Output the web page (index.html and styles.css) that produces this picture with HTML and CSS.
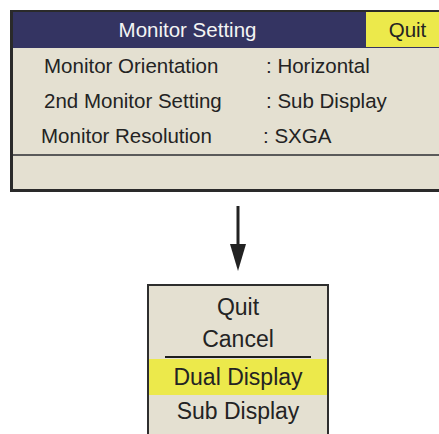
FILE: index.html
```html
<!DOCTYPE html>
<html lang="en">
<head>
  <meta charset="UTF-8">
  <meta name="viewport" content="width=device-width, initial-scale=1.0">
  <title>Monitor Setting</title>
  <link rel="stylesheet" href="styles.css">
</head>
<body>
  <div class="panel">
    <div class="panel-header">
      <div class="panel-title">Monitor Setting</div>
      <div class="panel-quit">Quit</div>
    </div>
    <div class="panel-rows">
      <div class="row">
        <span class="row-label">Monitor Orientation</span>
        <span class="row-value">: Horizontal</span>
      </div>
      <div class="row">
        <span class="row-label">2nd Monitor Setting</span>
        <span class="row-value">: Sub Display</span>
      </div>
      <div class="row row-shift">
        <span class="row-label">Monitor Resolution</span>
        <span class="row-value">: SXGA</span>
      </div>
    </div>
    <div class="panel-footer"></div>
  </div>

  <div class="lower">
    <svg class="arrow" width="16" height="65" viewBox="0 0 16 65">
      <line x1="8" y1="0" x2="8" y2="42" stroke="#222" stroke-width="3"/>
      <polygon points="0,38 16,38 8,65" fill="#222"/>
    </svg>

    <div class="menu">
      <div class="menu-item menu-first">Quit</div>
      <div class="menu-item">Cancel</div>
      <div class="menu-divider"></div>
      <div class="menu-item menu-selected">Dual Display</div>
      <div class="menu-item">Sub Display</div>
    </div>
  </div>
</body>
</html>
```

FILE: styles.css
```css
body {
  margin: 0;
  font-family: "Liberation Sans", Arial, sans-serif;
  color: #232323;
  background: #fff;
  overflow: hidden;
  height: 434px;
}
.panel {
  width: 436px;
  margin: 10px 0 0 10px;
  border: 2px solid #2a2a2a;
  border-bottom-width: 3px;
  border-left-width: 3px;
  background: #e4e0d1;
}
.panel-header {
  display: flex;
  height: 36px;
  background: #343462;
  font-size: 20.5px;
}
.panel-title {
  flex: 1;
  text-align: center;
  line-height: 36px;
  color: #f4f4f4;
  padding-right: 4px;
}
.panel-quit {
  width: 83px;
  margin-bottom: 1px;
  text-align: center;
  line-height: 35px;
  background: #ece94b;
}
.panel-rows {
  padding-bottom: 1px;
  border-bottom: 2px solid #5a5a5a;
}
.row {
  display: flex;
  height: 35px;
  line-height: 35px;
  padding-left: 31px;
  font-size: 20.5px;
}
.row-shift {
  padding-left: 28px;
}
.row-label {
  width: 222px;
}
.panel-footer {
  height: 33px;
}
.lower {
  width: 182px;
  margin-left: 147px;
  display: flex;
  flex-direction: column;
  align-items: center;
}
.arrow {
  display: block;
  margin-top: 14px;
}
.menu {
  width: 178px;
  margin-top: 13px;
  padding-bottom: 20px;
  border: 2px solid #2e2e2e;
  border-bottom: none;
  background: #e4e0d1;
  font-size: 23px;
}
.menu-item {
  height: 32px;
  line-height: 32px;
  text-align: center;
}
.menu-first {
  margin-top: 5px;
}
.menu-divider {
  height: 2px;
  margin: 1px 16px 1px;
  background: #1e1e1e;
}
.menu-selected {
  height: 36px;
  line-height: 36px;
  background: #ece94b;
}
```
